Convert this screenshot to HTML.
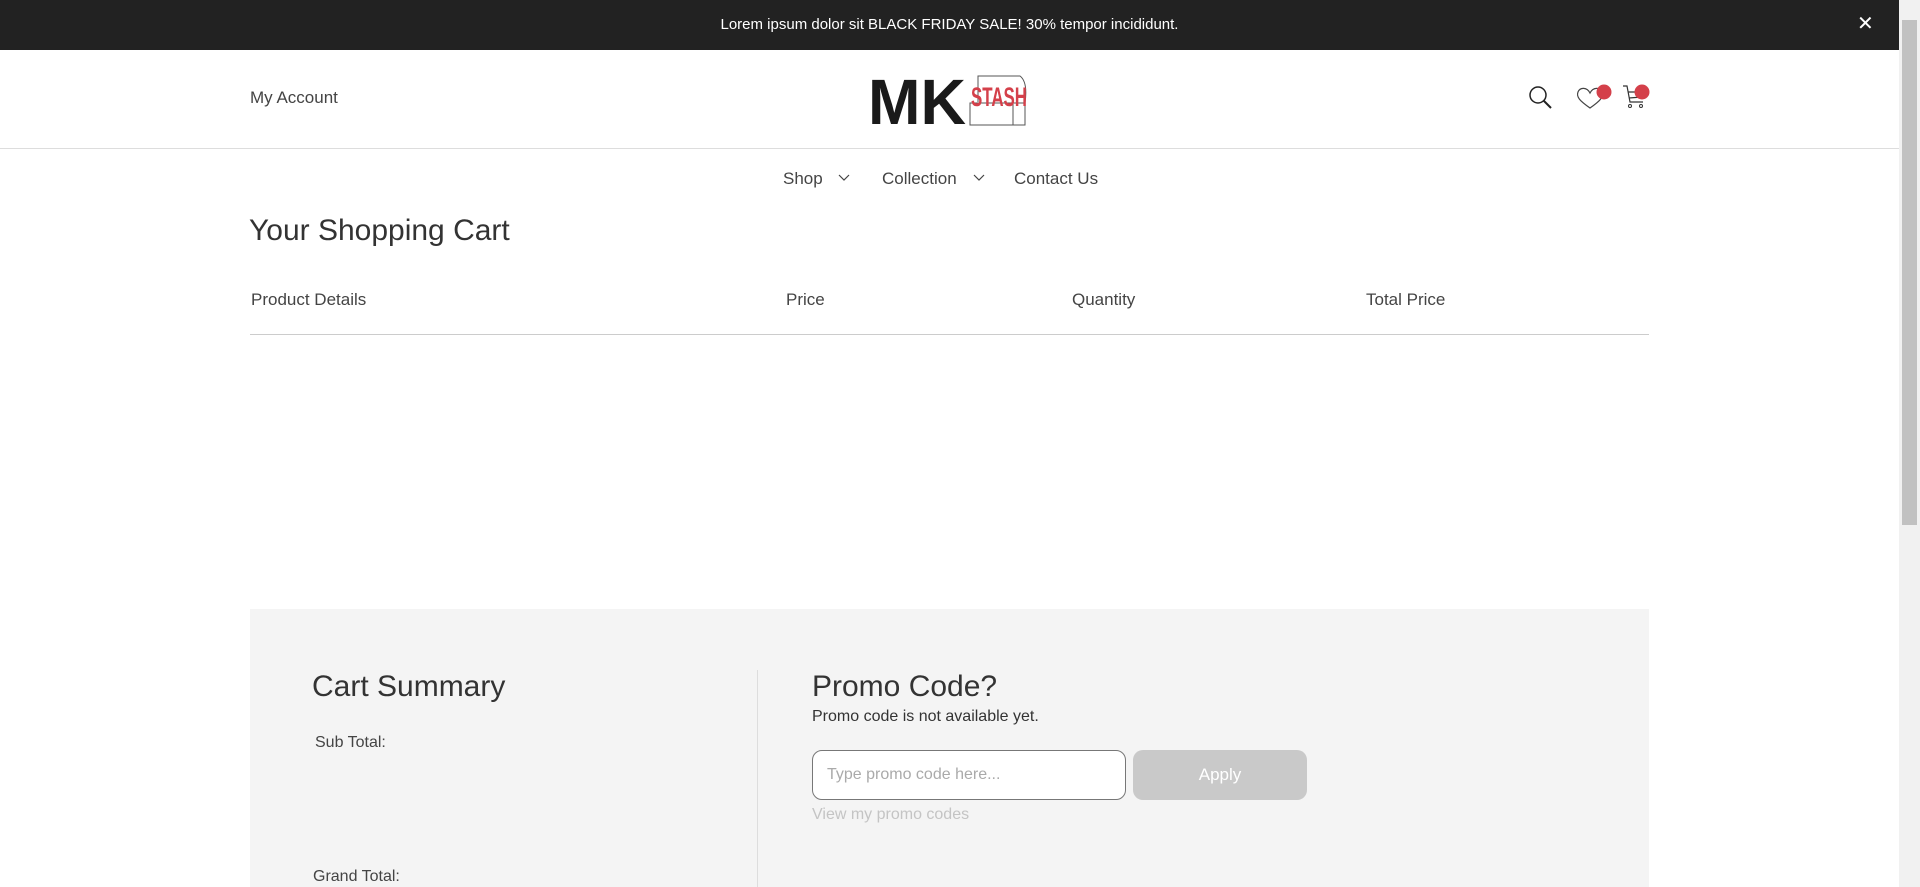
<!DOCTYPE html>
<html><head><meta charset="utf-8"><style>
*{margin:0;padding:0;box-sizing:border-box}
body{width:1920px;height:887px;overflow:hidden;background:#fff;font-family:"Liberation Sans",sans-serif;color:#333;position:relative}
.a{position:absolute;white-space:nowrap}
.top{left:0;top:0;width:1899px;height:50px;background:#222;color:#fff;font-size:15px;text-align:center;line-height:50px}
.sb{left:1899px;top:0;width:21px;height:887px;background:#f1f1f1}
.sb div{position:absolute;left:3px;top:20px;width:15px;height:505px;background:#c1c1c1}
.hdr{left:0;top:148px;width:1899px;height:1px;background:#ddd}
.t{transform:translateY(-50%)}
.grey{left:250px;top:609px;width:1399px;height:278px;background:#f4f4f4}
</style></head><body>
<div class="a top">Lorem ipsum dolor sit BLACK FRIDAY SALE! 30% tempor incididunt.</div>
<div class="a" style="left:1857px;top:14px;color:#fff;font-size:20px;line-height:20px">✕</div>
<div class="a sb"><div></div></div>
<div class="a t" style="left:250px;top:98px;font-size:17px;color:#444">My Account</div>
<svg class="a" style="left:868px;top:70px" width="164" height="58" viewBox="0 0 164 58">
<text x="0" y="54" font-family="Liberation Sans" font-weight="bold" font-size="64" fill="#1a1a1a" textLength="98" lengthAdjust="spacingAndGlyphs">MK</text>
<rect x="102" y="33" width="55" height="22" fill="none" stroke="#555" stroke-width="1"/>
<line x1="145" y1="33" x2="145" y2="55" stroke="#555"/>
<path d="M110 32 L110 6 L152 6 Q160 12 157 33" fill="none" stroke="#555"/>
<text x="103" y="36" font-family="Liberation Sans" font-weight="bold" font-size="27" fill="#d4404a" textLength="56" lengthAdjust="spacingAndGlyphs">STASH</text>
</svg>
<svg class="a" style="left:1527px;top:84px" width="28" height="28" viewBox="0 0 28 28"><circle cx="11" cy="11" r="8" fill="none" stroke="#222" stroke-width="1.5"/><line x1="17" y1="17" x2="24" y2="24" stroke="#222" stroke-width="2"/></svg>
<svg class="a" style="left:1575px;top:84px" width="40" height="30" viewBox="0 0 40 30"><path d="M15 24 C5 17 1 13 3 8 C5 3 12 3 15 9 C18 3 25 3 27 8 C29 13 25 17 15 24Z" fill="none" stroke="#444" stroke-width="1.2"/><circle cx="29" cy="8" r="7.5" fill="#d4404a"/></svg>
<svg class="a" style="left:1621px;top:84px" width="30" height="30" viewBox="0 0 30 30"><path d="M2 2 L6 2 L9 18 L22 18 M7 8 L22 8 M8 14 L21 13" fill="none" stroke="#333" stroke-width="1.2"/><circle cx="9" cy="22" r="1.5" fill="none" stroke="#333"/><circle cx="20" cy="22" r="1.5" fill="none" stroke="#333"/><circle cx="21" cy="8" r="7.5" fill="#d4404a"/></svg>
<div class="a hdr"></div>
<div class="a t" style="left:783px;top:179px;font-size:17px;color:#444">Shop</div>
<svg class="a" style="left:838px;top:174px" width="12" height="8"><path d="M1 1 L6 6 L11 1" fill="none" stroke="#444" stroke-width="1.2"/></svg>
<div class="a t" style="left:882px;top:179px;font-size:17px;color:#444">Collection</div>
<svg class="a" style="left:973px;top:174px" width="12" height="8"><path d="M1 1 L6 6 L11 1" fill="none" stroke="#444" stroke-width="1.2"/></svg>
<div class="a t" style="left:1014px;top:179px;font-size:17px;color:#444">Contact Us</div>
<div class="a t" style="left:249px;top:231px;font-size:30px;color:#333">Your Shopping Cart</div>
<div class="a t" style="left:251px;top:300px;font-size:17px;color:#444">Product Details</div>
<div class="a t" style="left:786px;top:300px;font-size:17px;color:#444">Price</div>
<div class="a t" style="left:1072px;top:300px;font-size:17px;color:#444">Quantity</div>
<div class="a t" style="left:1366px;top:300px;font-size:17px;color:#444">Total Price</div>
<div class="a" style="left:250px;top:334px;width:1399px;height:1px;background:#ccc"></div>
<div class="a grey"></div>
<div class="a" style="left:757px;top:670px;width:1px;height:217px;background:#ddd"></div>
<div class="a t" style="left:312px;top:687px;font-size:30px;color:#333">Cart Summary</div>
<div class="a t" style="left:315px;top:743px;font-size:16px;color:#444">Sub Total:</div>
<div class="a t" style="left:313px;top:877px;font-size:16px;color:#444">Grand Total:</div>
<div class="a t" style="left:812px;top:687px;font-size:30px;color:#333">Promo Code?</div>
<div class="a t" style="left:812px;top:717px;font-size:16px;color:#333">Promo code is not available yet.</div>
<div class="a" style="left:812px;top:750px;width:314px;height:50px;background:#fff;border:1px solid #777;border-radius:10px;font-size:16px;color:#aaa;line-height:48px;padding-left:14px">Type promo code here...</div>
<div class="a" style="left:1133px;top:750px;width:174px;height:50px;background:#c9c9c9;border-radius:10px;font-size:17px;color:#fff;line-height:50px;text-align:center">Apply</div>
<div class="a t" style="left:812px;top:815px;font-size:16px;color:#c4c4c4">View my promo codes</div>
</body></html>
